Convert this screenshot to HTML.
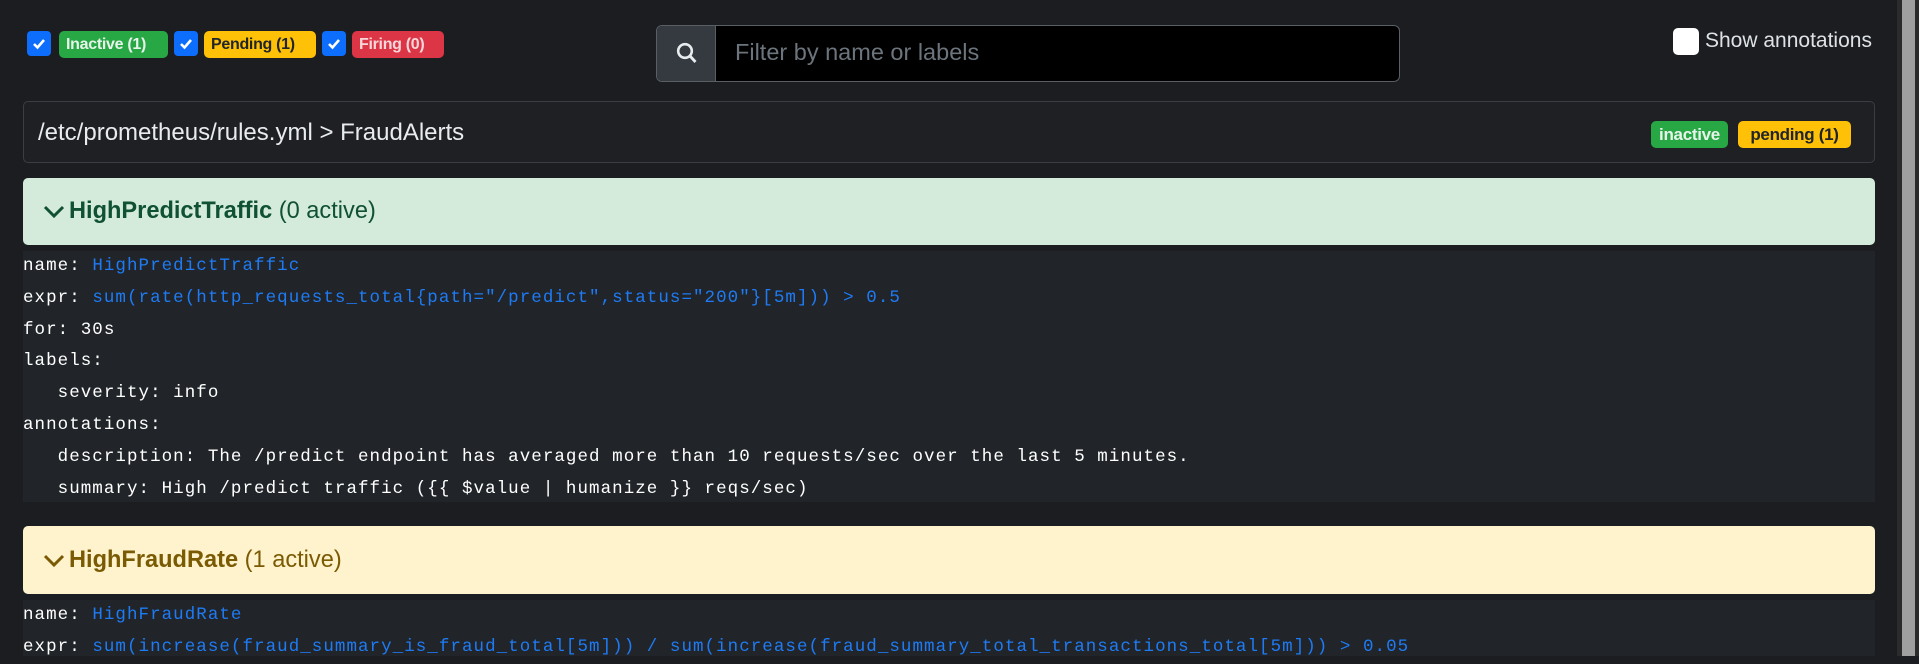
<!DOCTYPE html>
<html><head><meta charset="utf-8"><style>
*{box-sizing:border-box;margin:0;padding:0}
body{width:1919px;height:656px;background:#1b1d21;font-family:"Liberation Sans",sans-serif;position:relative;overflow:hidden;color:#dee2e6}
.abs{position:absolute}
.cb{position:absolute;top:31px;width:24px;height:25px;background:#0d6efd;border-radius:4px}
.cb svg{position:absolute;left:5px;top:6px}
.badge{position:absolute;top:31px;height:27px;border-radius:5px;font-weight:bold;font-size:16px;line-height:27px;padding:0 7px;letter-spacing:-0.3px}
.code{position:absolute;left:23px;right:44px;background:#212529;font-family:"Liberation Mono",monospace;font-size:17.5px;letter-spacing:1.05px;color:#fff;padding-left:0}
.code div{height:31.8px;line-height:31.8px;white-space:pre}
.b{color:#1e7bf5}
.hd{position:absolute;left:23px;right:44px;border-radius:5px;font-size:23.6px}
.hb{position:absolute;top:19px;height:27px;font-weight:bold;font-size:17px;line-height:27px;text-align:center;border-radius:5px;letter-spacing:-0.3px}
</style></head><body>
<div class="cb" style="left:27px"><svg width="14" height="13" viewBox="0 0 14 13"><path d="M2 7l3.5 3.5L12 3" stroke="#fff" stroke-width="2.6" fill="none"/></svg></div>
<div class="badge" style="left:59px;background:#28a745;color:#e6f4ea;width:109px">Inactive (1)</div>
<div class="cb" style="left:174px"><svg width="14" height="13" viewBox="0 0 14 13"><path d="M2 7l3.5 3.5L12 3" stroke="#fff" stroke-width="2.6" fill="none"/></svg></div>
<div class="badge" style="left:204px;background:#ffc107;color:#212529;width:112px">Pending (1)</div>
<div class="cb" style="left:322px"><svg width="14" height="13" viewBox="0 0 14 13"><path d="M2 7l3.5 3.5L12 3" stroke="#fff" stroke-width="2.6" fill="none"/></svg></div>
<div class="badge" style="left:352px;background:#dc3545;color:#f8d7da;width:92px">Firing (0)</div>

<div class="abs" style="left:656px;top:25px;width:744px;height:57px;border:1px solid #5a5f66;border-radius:6px;background:#000;overflow:hidden">
 <div class="abs" style="left:0;top:0;width:59px;height:55px;background:#343a40;border-right:1px solid #5a5f66">
  <svg class="abs" style="left:19px;top:16px" width="22" height="24" viewBox="0 0 22 24"><circle cx="9" cy="9" r="6.8" stroke="#e9ecef" stroke-width="2.6" fill="none"/><path d="M14 14l5.5 6" stroke="#e9ecef" stroke-width="2.8"/></svg>
 </div>
 <div class="abs" style="left:78px;top:13px;font-size:23.5px;color:#6c757d">Filter by name or labels</div>
</div>

<div class="abs" style="left:1673px;top:28px;width:26px;height:27px;background:#fff;border-radius:5px"></div>
<div class="abs" style="left:1705px;top:29px;font-size:21px;color:#dee2e6">Show annotations</div>

<div class="abs" style="left:23px;top:101px;width:1852px;height:62px;border:1px solid #3a3e44;border-radius:5px;background:#1e2024">
 <div class="abs" style="left:14px;top:17px;font-size:24px;color:#e9ecef">/etc/prometheus/rules.yml &gt; FraudAlerts</div>
 <div class="hb" style="left:1627px;width:77px;background:#28a745;color:#e6f4ea">inactive</div>
 <div class="hb" style="left:1714px;width:113px;background:#ffc107;color:#212529">pending (1)</div>
</div>

<div class="hd" style="top:178px;height:67px;background:#d4ebdb;color:#0f5132">
 <svg class="abs" style="left:20px;top:26px" width="22" height="16" viewBox="0 0 22 16"><path d="M2 3l9 9 9-9" stroke="#0f5132" stroke-width="3" fill="none"/></svg>
 <div class="abs" style="left:46px;top:20px"><b>HighPredictTraffic</b> (0 active)</div>
</div>
<div class="code" style="top:251px;height:251px">
<div>name: <span class="b">HighPredictTraffic</span></div>
<div>expr: <span class="b">sum(rate(http_requests_total{path="/predict",status="200"}[5m])) &gt; 0.5</span></div>
<div>for: 30s</div>
<div>labels:</div>
<div>   severity: info</div>
<div>annotations:</div>
<div>   description: The /predict endpoint has averaged more than 10 requests/sec over the last 5 minutes.</div>
<div>   summary: High /predict traffic ({{ $value | humanize }} reqs/sec)</div>
</div>

<div class="hd" style="top:526px;height:68px;background:#fff3cd;color:#7a5a03">
 <svg class="abs" style="left:20px;top:27px" width="22" height="16" viewBox="0 0 22 16"><path d="M2 3l9 9 9-9" stroke="#7a5a03" stroke-width="3" fill="none"/></svg>
 <div class="abs" style="left:46px;top:21px"><b>HighFraudRate</b> (1 active)</div>
</div>
<div class="code" style="top:600px;height:56px">
<div>name: <span class="b">HighFraudRate</span></div>
<div>expr: <span class="b">sum(increase(fraud_summary_is_fraud_total[5m])) / sum(increase(fraud_summary_total_transactions_total[5m])) &gt; 0.05</span></div>
</div>

<div class="abs" style="left:1897px;top:0;width:22px;height:656px;background:#2b2b2b"></div>
<div class="abs" style="left:1902px;top:0;width:13px;height:656px;background:#a0a0a0"></div>
</body></html>
